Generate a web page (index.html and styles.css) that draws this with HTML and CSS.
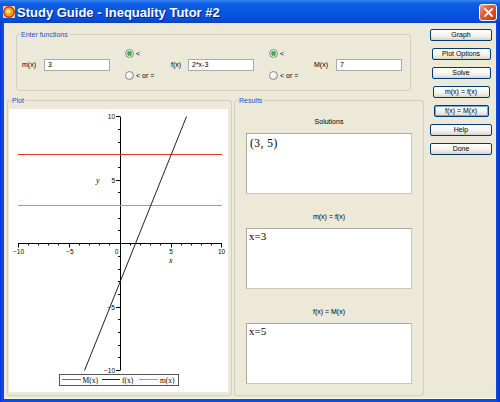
FILE: index.html
```html
<!DOCTYPE html>
<html>
<head>
<meta charset="utf-8">
<title>Study Guide - Inequality Tutor #2</title>
<link rel="stylesheet" href="styles.css">
</head>
<body>
<div class="window">
	<div class="titlebar">
		<svg class="app-icon" viewBox="0 0 12 12">
			<rect x="0" y="0" width="12" height="12" rx="1" fill="#F4D9A8"/>
			<circle cx="6" cy="6" r="5.2" fill="#F7A21B" stroke="#C8301A" stroke-width="1.4"/>
			<circle cx="5.3" cy="5.3" r="2.2" fill="#FCE36A"/>
		</svg>
		<span class="title">Study Guide - Inequality Tutor #2</span>
		<span class="close">
			<svg viewBox="0 0 9 9" width="9" height="9">
				<path d="M1 1 L8 8 M8 1 L1 8" stroke="#fff" stroke-width="1.8" stroke-linecap="square"/>
			</svg>
		</span>
	</div>

	<div class="client">
		<div class="main">
			<fieldset class="group enter">
				<legend>Enter functions</legend>
				<div class="fn-row">
					<span class="fn-lbl w22">m(x)</span>
					<div class="field">3</div>
					<div class="radios w46">
						<div class="radio on"><span class="dot"></span>&lt;</div>
						<div class="radio"><span class="dot"></span>&lt; or =</div>
					</div>
					<span class="fn-lbl w17">f(x)</span>
					<div class="field">2*x-3</div>
					<div class="radios w45">
						<div class="radio on"><span class="dot"></span>&lt;</div>
						<div class="radio"><span class="dot"></span>&lt; or =</div>
					</div>
					<span class="fn-lbl w22">M(x)</span>
					<div class="field">7</div>
				</div>
			</fieldset>

			<div class="lower">
				<fieldset class="group plot">
					<legend>Plot</legend>
					<div class="plot-body">
						<svg class="graph" width="219" height="283" viewBox="0 0 219 283">
							<!-- axes -->
							<path d="M9 134.5 H213 M111.5 7.5 V261.5" stroke="#000" stroke-width="1" fill="none"/>
							<!-- x ticks -->
							<path stroke="#000" stroke-width="1" fill="none"
								d="M9.5 134.5 v4 M19.5 134.5 v2 M29.5 134.5 v2 M39.5 134.5 v2 M49.5 134.5 v2 M60.5 134.5 v4
								M70.5 134.5 v2 M80.5 134.5 v2 M90.5 134.5 v2 M100.5 134.5 v2
								M121.5 134.5 v2 M131.5 134.5 v2 M141.5 134.5 v2 M151.5 134.5 v2 M162.5 134.5 v4
								M172.5 134.5 v2 M182.5 134.5 v2 M192.5 134.5 v2 M202.5 134.5 v2 M212.5 134.5 v4"/>
							<!-- y ticks -->
							<path stroke="#000" stroke-width="1" fill="none"
								d="M107 7.5 h4 M109 20.5 h2 M109 33.5 h2 M109 45.5 h2 M109 58.5 h2 M107 71.5 h4
								M109 83.5 h2 M109 96.5 h2 M109 109.5 h2 M109 121.5 h2
								M109 147.5 h2 M109 160.5 h2 M109 172.5 h2 M109 185.5 h2 M107 198.5 h4
								M109 210.5 h2 M109 223.5 h2 M109 236.5 h2 M109 248.5 h2 M107 261.5 h4"/>
							<!-- curves -->
							<line x1="9" y1="45.5" x2="213" y2="45.5" stroke="#E03838" stroke-width="1"/>
							<line x1="9" y1="96.5" x2="213" y2="96.5" stroke="#44DD44" stroke-width="1"/>
							<line x1="177.5" y1="7.5" x2="75.5" y2="261.5" stroke="#222" stroke-width="1"/>
							<!-- tick labels -->
							<g class="ticklbl">
								<text x="9.5" y="145" text-anchor="middle">&#8722;10</text>
								<text x="61" y="145" text-anchor="middle">&#8722;5</text>
								<text x="107.5" y="145" text-anchor="middle">0</text>
								<text x="162" y="145" text-anchor="middle">5</text>
								<text x="212.5" y="145" text-anchor="middle">10</text>
								<text x="106" y="10" text-anchor="end">10</text>
								<text x="106" y="73.5" text-anchor="end">5</text>
								<text x="106" y="200.5" text-anchor="end">&#8722;5</text>
								<text x="106" y="264" text-anchor="end">&#8722;10</text>
							</g>
							<text class="axislbl" x="87" y="74">y</text>
							<text class="axislbl" x="160" y="154">x</text>
							<!-- legend -->
							<rect x="50.5" y="265.5" width="119" height="11" fill="#fff" stroke="#555"/>
							<line x1="53" y1="270.5" x2="72" y2="270.5" stroke="#E03838"/>
							<line x1="93" y1="270.5" x2="111" y2="270.5" stroke="#222"/>
							<line x1="130" y1="270.5" x2="149" y2="270.5" stroke="#44DD44"/>
							<g class="keylbl">
								<text x="73.5" y="273.5">M(x)</text>
								<text x="113" y="273.5">f(x)</text>
								<text x="151" y="273.5">m(x)</text>
							</g>
						</svg>
					</div>
				</fieldset>

				<fieldset class="group results">
					<legend>Results</legend>
					<div class="res-body">
						<div class="res-label">Solutions</div>
						<div class="res-box sol">(3, 5)</div>
						<div class="res-label">m(x) = f(x)</div>
						<div class="res-box">x=3</div>
						<div class="res-label">f(x) = M(x)</div>
						<div class="res-box">x=5</div>
					</div>
				</fieldset>
			</div>
		</div>

		<div class="buttons">
			<div class="btn w62">Graph</div>
			<div class="btn w59">Plot Options</div>
			<div class="btn w59">Solve</div>
			<div class="btn w57">m(x) = f(x)</div>
			<div class="btn w55 focus">f(x) = M(x)</div>
			<div class="btn w62">Help</div>
			<div class="btn w62">Done</div>
		</div>
	</div>
</div>
</body>
</html>
```

FILE: styles.css
```css
*
{
	box-sizing:border-box;
}
body
{
	margin:0;
	font-family:"Liberation Sans", Arial, sans-serif;
	font-size:7px;
	color:#000;
}

/* window frame */
.window
{
	width:500px;
	height:402px;
	overflow:hidden;
	display:flex;
	flex-direction:column;
	background:linear-gradient(to right, #0831D9 0, #0A4BE0 2px, #0A4BE0 496px, #0831D9 500px);
}
.titlebar
{
	height:23px;
	flex:none;
	display:flex;
	align-items:center;
	padding:0 3px;
	background:linear-gradient(to bottom, #3D8CF3 0, #2877EE 1px, #0C5DE4 4px, #0756DF 12px, #0651D8 18px, #0847C8 22px, #0A3EB5 23px);
}
.app-icon
{
	width:12px;
	height:12px;
	margin-right:2px;
	flex:none;
}
.title
{
	color:#fff;
	font-weight:bold;
	font-size:13px;
	padding-top:1px;
	text-shadow:1px 1px 0 #0A1E8A;
}
.close
{
	margin-left:auto;
	width:18px;
	height:17px;
	margin-top:1px;
	border:1px solid #fff;
	border-radius:3px;
	display:flex;
	align-items:center;
	justify-content:center;
	background:linear-gradient(135deg, #F4A088 0, #E4633D 35%, #D74A22 70%, #C23A14 100%);
}

/* client area */
.client
{
	flex:1;
	margin:0 4px 4px;
	display:flex;
	padding:0 4px 0 3px;
	background:#ECE9D8;
	box-shadow:0 1px 0 #F8F6EE;
}
.main
{
	width:417px;
	flex:none;
}

fieldset.group
{
	margin:0;
	padding:0;
	min-width:0;
	border:1px solid #D0D0BF;
	border-radius:3px;
}
fieldset.group legend
{
	margin-left:3px;
	padding:0 1px;
	line-height:9px;
	color:#2050C8;
}

/* enter functions */
fieldset.enter
{
	margin:7px 0 0 9px;
	width:395px;
}
.fn-row
{
	height:51px;
	display:flex;
	align-items:center;
	padding-left:5px;
}
.fn-lbl
{
	flex:none;
}
.w22 { width:22px; }
.w17 { width:17px; }
.field
{
	width:66px;
	height:12px;
	flex:none;
	background:#fff;
	border:1px solid #A5ACB2;
	padding-left:3px;
	line-height:10px;
}
.radios
{
	height:31px;
	margin-left:15px;
	flex:none;
	display:flex;
	flex-direction:column;
	justify-content:space-between;
}
.w46 { width:46px; }
.w45 { width:45px; }
.radio
{
	height:9px;
	display:flex;
	align-items:center;
	gap:2px;
}
.dot
{
	width:9px;
	height:9px;
	flex:none;
	border-radius:50%;
	border:1px solid #7E8C9B;
	background:radial-gradient(circle at 35% 35%, #fff 0, #F4F3EE 40%, #DCD9CE 100%);
}
.radio.on .dot
{
	background:radial-gradient(circle at 50% 50%, #5FD05F 0, #22A022 1.6px, #7ECB7E 2.4px, #F4F3EE 3px, #DCD9CE 100%);
}

/* plot and results */
.lower
{
	display:flex;
	gap:2px;
	margin-top:5px;
}
.plot
{
	width:225px;
	flex:none;
}
.plot-body
{
	padding:4px 3px 3px 1px;
}
.graph
{
	display:block;
	background:#fff;
}
.ticklbl text
{
	font-family:"Liberation Sans", Arial, sans-serif;
	font-size:6.5px;
}
.axislbl
{
	font-family:"Liberation Serif", "Times New Roman", serif;
	font-style:italic;
	font-size:8px;
}
.keylbl text
{
	font-family:"Liberation Serif", "Times New Roman", serif;
	font-size:7.5px;
}
.results
{
	width:190px;
	flex:none;
}
.res-body
{
	padding:12px 11px 0;
}
.res-label
{
	height:9px;
	line-height:9px;
	text-align:center;
	margin-bottom:7px;
}
.res-box + .res-label
{
	margin-top:18px;
}
.res-box
{
	height:61px;
	background:#fff;
	border:1px solid #A9A8A2;
	border-right-color:#C9C7BC;
	border-bottom-color:#C9C7BC;
	padding:1px 2px;
	font-family:"Liberation Serif", "Times New Roman", serif;
	font-size:11px;
	line-height:12px;
}
.res-box.sol
{
	padding:3px 3px;
	font-size:11.5px;
	letter-spacing:0.5px;
}

/* right hand buttons */
.buttons
{
	width:62px;
	flex:none;
	margin-left:6px;
	padding-top:6px;
	display:flex;
	flex-direction:column;
	align-items:center;
	gap:7px;
}
.btn
{
	height:12px;
	border:1px solid #003C74;
	border-radius:2px;
	background:linear-gradient(to bottom, #FFFFFF 0, #F6F5F0 50%, #E9E6DD 80%, #D6D0C5 100%);
	line-height:10px;
	text-align:center;
}
.btn.focus
{
	box-shadow:inset 0 0 0 1px #7EA2E6;
}
.w62 { width:62px; }
.w59 { width:59px; }
.w57 { width:57px; }
.w55 { width:55px; }
```
